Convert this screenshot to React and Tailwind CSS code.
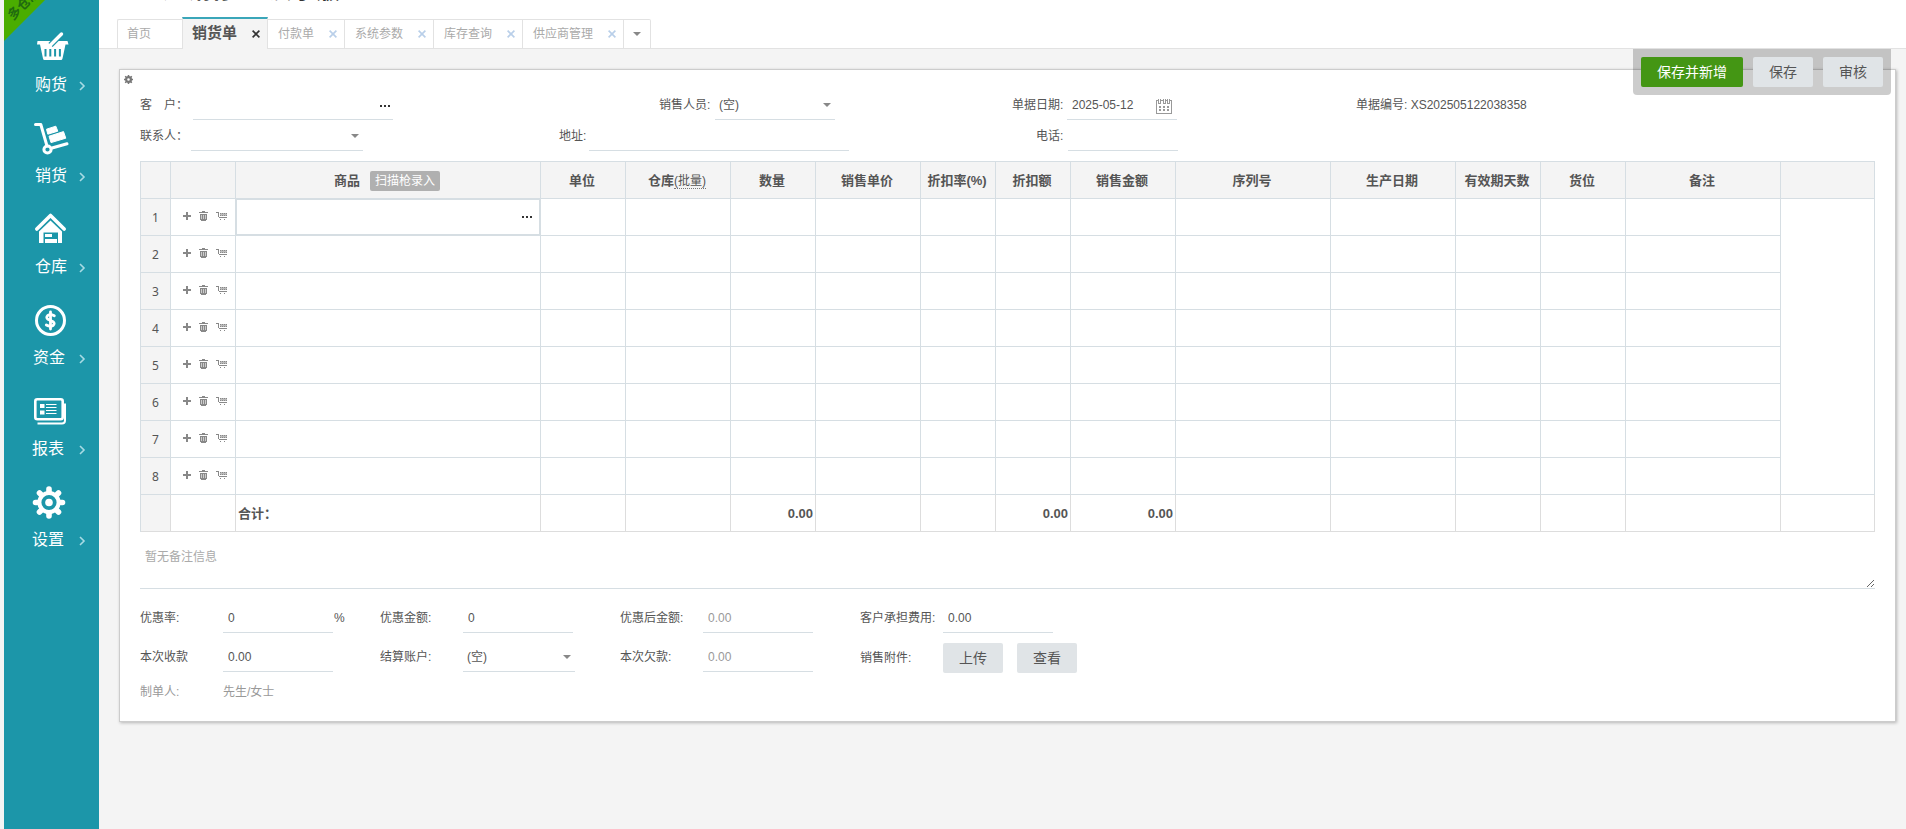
import { useState } from "react";

const menus = [
    { label: "购货", icon: BasketIcon, pad: "pl-[31px]" },
    { label: "销货", icon: TrolleyIcon, pad: "pl-[31px]" },
    { label: "仓库", icon: HouseIcon, pad: "pl-[31px]" },
    { label: "资金", icon: MoneyIcon, pad: "pl-[29px]" },
    { label: "报表", icon: ReportIcon, pad: "pl-7" },
    { label: "设置", icon: GearIcon, pad: "pl-7" },
];

const tabs = ["付款单", "系统参数", "库存查询", "供应商管理"];

const columns = [
    { key: "no", width: "w-[30px]" },
    { key: "ops", width: "w-[65px]" },
    { key: "goods", width: "w-[305px]", label: "商品" },
    { key: "unit", width: "w-[85px]", label: "单位" },
    { key: "store", width: "w-[105px]", label: "仓库" },
    { key: "qty", width: "w-[85px]", label: "数量", total: "0.00" },
    { key: "price", width: "w-[105px]", label: "销售单价" },
    { key: "rate", width: "w-[75px]", label: "折扣率(%)" },
    { key: "discount", width: "w-[75px]", label: "折扣额", total: "0.00" },
    { key: "amount", width: "w-[105px]", label: "销售金额", total: "0.00" },
    { key: "serial", width: "w-[155px]", label: "序列号" },
    { key: "date", width: "w-[125px]", label: "生产日期" },
    { key: "days", width: "w-[85px]", label: "有效期天数" },
    { key: "place", width: "w-[85px]", label: "货位" },
    { key: "note", width: "w-[155px]", label: "备注" },
    { key: "fill", width: "" },
];

const rows = [1, 2, 3, 4, 5, 6, 7, 8];

function BasketIcon() {
    return (
        <svg width="36" height="36" viewBox="0 0 36 36" fill="none">
            <path d="M3.5 12H33.5L34.5 15.5H31.5L28.5 29.5Q28.2 31 27 31H10.5Q9.3 31 9 29.5L6 15.5H3Z" fill="#fff" />
            <path d="M11.5 20v7.5M16.3 20v7.5M21.1 20v7.5M25.9 20v7.5" stroke="#1c96a9" strokeWidth="2" />
            <path d="M27.5 5L16.5 16" stroke="#1c96a9" strokeWidth="6" />
            <path d="M27.5 5L16.5 16" stroke="#fff" strokeWidth="3.4" strokeLinecap="round" />
        </svg>
    );
}

function TrolleyIcon() {
    return (
        <svg width="36" height="36" viewBox="0 0 36 36" fill="none">
            <path d="M1.5 4.5H6.8L13 26" stroke="#fff" strokeWidth="3" strokeLinecap="round" strokeLinejoin="round" />
            <circle cx="13.5" cy="29.5" r="3.6" stroke="#fff" strokeWidth="3" />
            <path d="M18 28L33 23.8" stroke="#fff" strokeWidth="3" strokeLinecap="round" />
            <path d="M12.5 9.2L21.8 6.2L23.8 11.2L13.8 14.2Z" fill="#fff" stroke="#fff" strokeLinejoin="round" />
            <path d="M15 16.2L29.5 11.6L31.8 18.2L17 22.6Z" fill="#fff" stroke="#fff" strokeLinejoin="round" />
        </svg>
    );
}

function HouseIcon() {
    return (
        <svg width="36" height="36" viewBox="0 0 36 36" fill="none">
            <path d="M2.8 18L16.5 4.5L30.2 18" stroke="#fff" strokeWidth="3.6" strokeLinecap="round" strokeLinejoin="round" />
            <path d="M16.5 9.5L28 20.5V32H5V20.5Z" fill="#fff" />
            <path d="M9.5 21.5H24V32H9.5Z" fill="#1c96a9" />
            <path d="M11 23h7v3h-7zM11 28h12v4H11z" fill="#fff" />
        </svg>
    );
}

function MoneyIcon() {
    return (
        <svg width="36" height="36" viewBox="0 0 36 36" fill="none" stroke="#fff">
            <circle cx="18.5" cy="18.5" r="14" strokeWidth="3" />
            <path d="M22.3 13.8Q18.5 11.8 15.8 13.4Q13.6 15.6 16 17.4L21 19.6Q23.4 21.6 21 23.6Q18 25.2 14.3 23" strokeWidth="2.8" strokeLinecap="round" />
            <path d="M18.5 10V27" strokeWidth="2.8" strokeLinecap="round" />
        </svg>
    );
}

function ReportIcon() {
    return (
        <svg width="36" height="36" viewBox="0 0 36 36" fill="none">
            <rect x="4.3" y="6.3" width="27.4" height="20" rx="2" stroke="#fff" strokeWidth="2.6" />
            <path d="M34 10.5V27.5Q34 30.5 31 30.5H6.5" stroke="#fff" strokeWidth="2" />
            <path d="M9 11h4.5v4H9zM9 17.5h4.5v4H9z" fill="#fff" />
            <path d="M15 11.5h10.5M15 14.5h10.5M15 17.5h10.5M15 20.5h10.5" stroke="#fff" strokeWidth="1" />
        </svg>
    );
}

function GearIcon() {
    return (
        <svg width="36" height="36" viewBox="0 0 36 36" fill="none">
            <path
                d="M18 5v27M4.500 18.500h27M8.500 9l19 19M27.500 9l-19 19"
                stroke="#fff"
                strokeWidth="5.6"
                strokeLinecap="round"
            />
            <circle cx="18" cy="18.5" r="9.6" fill="#1c96a9" stroke="#fff" strokeWidth="4" />
            <circle cx="18" cy="18.5" r="3.8" fill="#fff" />
        </svg>
    );
}

const SmallGear = () => (
    <svg width="9" height="9" viewBox="0 0 9 9" fill="none" stroke="#777">
        <path d="M4.5 0v9M0 4.5h9M1.2 1.2l6.6 6.6M7.8 1.2L1.2 7.8" strokeWidth="1.5" />
        <circle cx="4.5" cy="4.5" r="2.4" fill="#fff" strokeWidth="2.2" />
    </svg>
);

const Caret = () => (
    <svg className="pointer-events-none" width="8" height="4" viewBox="0 0 8 4" fill="#888">
        <path d="M0 0h8L4 4z" />
    </svg>
);

const Dots = () => (
    <svg width="10" height="2" viewBox="0 0 10 2" fill="#333" shapeRendering="crispEdges">
        <path d="M0 0h2v2H0zM4 0h2v2H4zM8 0h2v2H8z" />
    </svg>
);

const CloseIcon = () => (
    <svg width="8" height="8" viewBox="0 0 8 8" fill="none" stroke="currentColor" strokeWidth="1.6">
        <path d="M.6 .6l6.8 6.8M7.4 .6L.6 7.4" />
    </svg>
);

const PlusIcon = () => (
    <svg width="8" height="8" viewBox="0 0 8 8" fill="#888" shapeRendering="crispEdges">
        <path d="M3 0h2v8H3zM0 3h8v2H0z" />
    </svg>
);

const TrashIcon = () => (
    <svg width="9" height="10" viewBox="0 0 9 10" fill="#888" shapeRendering="crispEdges">
        <path d="M3 0h3v1H3zM0 1h9v1H0zM1 3h7v6H1zM2 9h5v1H2z" />
        <path d="M2 4h1v4H2zM4 4h1v4H4zM6 4h1v4H6z" fill="#ccc" />
    </svg>
);

const CartIcon = () => (
    <svg width="11" height="8" viewBox="0 0 11 8" fill="#888" shapeRendering="crispEdges">
        <path d="M0 0h2v1H0zM2 0h1v5H2zM3 5h8v1H3zM4 7h1v1H4zM8 7h1v1H8z" />
        <path d="M4 1h7v3H4z" fill="#bbb" />
        <path d="M4 1h1v1H4zM6 1h1v1H6zM8 1h1v1H8zM10 1h1v1h-1zM4 3h1v1H4zM6 3h1v1H6zM8 3h1v1H8zM10 3h1v1h-1z" />
    </svg>
);

const CalendarIcon = () => (
    <svg width="16" height="16" viewBox="0 0 16 16" fill="none" stroke="#999" shapeRendering="crispEdges">
        <path d="M2.5 2.5H.5v13h15v-13h-2M5 2.5h1.5M9.5 2.5H11" />
        <path d="M2.5 1v4h2v-4M7 1v4h2v-4M11.5 1v4h2v-4" />
        <path d="M3 9h2M7 9h2M11 9h2M3 12h2M7 12h2M11 12h2" strokeWidth="2" />
    </svg>
);

const Field = ({ id, label, labelWidth = "", width, value = "", muted, children }) => (
    <div className="flex items-center">
        <label htmlFor={id} className={`shrink-0 pb-0.5 whitespace-nowrap ${labelWidth}`}>{label}</label>
        <div className={`flex h-7 items-center border-b border-[#d6dee3] ${width}`}>
            <input
                id={id}
                type="text"
                defaultValue={value}
                readOnly={muted}
                className={`h-full w-full min-w-0 bg-transparent px-[5px] pb-0.5 outline-none ${muted ? "text-[#999]" : ""}`}
            />
            {children}
        </div>
    </div>
);

const SelectField = ({ id, label, labelWidth = "", width, option = "" }) => (
    <div className="flex items-center">
        <label htmlFor={id} className={`shrink-0 pb-0.5 whitespace-nowrap ${labelWidth}`}>{label}</label>
        <div className={`relative flex h-7 items-center border-b border-[#d6dee3] ${width}`}>
            <select id={id} className="h-full w-full appearance-none bg-transparent px-1 pb-0.5 outline-none">
                <option>{option}</option>
            </select>
            <span className="pointer-events-none absolute right-1 pb-0.5">
                <Caret />
            </span>
        </div>
    </div>
);

const GrayButton = ({ children }) => (
    <button type="button" className="h-[30px] w-[60px] rounded-xs bg-[#e0e4e7] text-sm text-[#555]">
        {children}
    </button>
);

const Sidebar = () => (
    <aside className="relative ml-1 w-[95px] shrink-0 bg-[#1c96a9] text-white">
        <div className="absolute top-0 left-0 size-[41px] overflow-hidden bg-[#4aad00] [clip-path:polygon(0_0,100%_0,0_100%)]">
            <span className="absolute -top-1 -left-3 w-16 origin-center -rotate-45 text-center text-[13px] leading-4 font-bold whitespace-nowrap text-[#1f6a10]">
                多仓版
            </span>
        </div>
        <nav className="pt-[29px]">
            {menus.map(({ label, icon: Icon, pad }) => (
                <a key={label} href="#" className={`block h-[91px] pr-[13px] ${pad}`}>
                    <span className="-ml-px block">
                        <Icon />
                    </span>
                    <span className="mt-2 flex items-center justify-between text-base leading-6">
                        {label}
                        <svg className="mt-0.5" width="7" height="10" viewBox="0 0 7 10" fill="none" stroke="#a8dbe4" strokeWidth="1.6">
                            <path d="M1 1l4 4-4 4" />
                        </svg>
                    </span>
                </a>
            ))}
        </nav>
    </aside>
);

const TabBar = () => (
    <header className="h-[49px] border-b border-[#e2e2e2] bg-white">
        <div className="h-[17px] overflow-hidden pl-16">
            <h1 className="-mt-[26px] text-2xl leading-8 font-bold whitespace-pre text-[#333]">进销存     演示版</h1>
        </div>
        <div className="flex h-8 items-end pl-[18px] text-xs text-[#aaa]">
            <button type="button" className="h-[30px] w-[65px] rounded-tl-xs border border-r-0 border-[#e2e2e2] px-[9px] text-left">
                首页
            </button>
            <div className="flex h-8 items-center border-x border-t-2 border-x-[#e2e2e2] border-t-[#3aa6b9] bg-[#f4f4f4] pr-[7px] pl-[9px] text-[#555]">
                <button type="button" className="pb-0.5 text-[15px] font-bold">销货单</button>
                <button type="button" aria-label="关闭" className="ml-[15px] text-[#333]"><CloseIcon /></button>
            </div>
            {tabs.map((tab) => (
                <div key={tab} className="flex h-[30px] items-center border-y border-r border-[#e2e2e2] pr-[7px] pl-2.5">
                    <button type="button">{tab}</button>
                    <button type="button" aria-label="关闭" className="ml-[15px] text-[#b9cfe9]"><CloseIcon /></button>
                </div>
            ))}
            <button type="button" aria-label="更多" className="flex h-[30px] w-[27px] items-center justify-center rounded-tr-xs border-y border-r border-[#e2e2e2]">
                <Caret />
            </button>
        </div>
    </header>
);

const HeaderCell = ({ column }) => {
    if (column.key === "goods") {
        return (
            <div className="flex items-center justify-center gap-2.5">
                {column.label}
                <button type="button" className="h-5 w-[70px] rounded-xs bg-[#b0b0b0] text-xs font-normal whitespace-nowrap text-white">
                    扫描枪录入
                </button>
            </div>
        );
    }
    if (column.key === "store") {
        return (
            <>
                {column.label}
                <a href="#" className="border-b border-dotted border-[#777] text-xs font-normal">(批量)</a>
            </>
        );
    }
    return column.label;
};

const GoodsTable = ({ active }) => (
    <table className="mt-2.5 w-full table-fixed border-separate border-spacing-0 border-t border-l border-[#d6dee3]">
        <colgroup>
            {columns.map((column) => (
                <col key={column.key} className={column.width} />
            ))}
        </colgroup>
        <thead>
            <tr className="h-[37px] bg-[#f4f4f4] text-[13px]">
                {columns.map((column) => (
                    <th key={column.key} className="border-r border-b border-[#d6dee3] pt-px pr-0.5 font-bold whitespace-nowrap">
                        <HeaderCell column={column} />
                    </th>
                ))}
            </tr>
        </thead>
        <tbody>
            {rows.map((row) => (
                <tr key={row} className="h-[37px]">
                    <td className="border-r border-b border-[#d6dee3] bg-[#f4f4f4] pt-0.5 text-center font-['Noto_Sans',sans-serif]">{row}</td>
                    <td className="border-r border-b border-[#d6dee3] p-0">
                        <div className="flex items-center gap-2 pb-0.5 pl-3">
                            <button type="button" aria-label="新增行"><PlusIcon /></button>
                            <button type="button" aria-label="删除行"><TrashIcon /></button>
                            <button type="button" aria-label="选择商品"><CartIcon /></button>
                        </div>
                    </td>
                    <td className="border-r border-b border-[#d6dee3] p-0">
                        {row === active && (
                            <div className="flex h-9 items-center border border-[#d6dee3] pr-[7px]">
                                <input aria-label="商品" className="h-full min-w-0 flex-1 px-1 outline-none" />
                                <button type="button" aria-label="选择"><Dots /></button>
                            </div>
                        )}
                    </td>
                    {columns.slice(3, -1).map((column) => (
                        <td key={column.key} className="border-r border-b border-[#d6dee3] p-0" />
                    ))}
                    {row === 1 && <td rowSpan={rows.length} className="border-r border-b border-[#d6dee3] p-0" />}
                </tr>
            ))}
        </tbody>
        <tfoot>
            <tr className="h-[37px] text-[13px] font-bold">
                <td className="border-r border-b border-[#ddd] bg-[#f4f4f4] p-0" />
                <td className="border-r border-b border-[#ddd] p-0" />
                <td className="border-r border-b border-[#ddd] px-0.5 pt-0.5">合计：</td>
                {columns.slice(3).map((column) => (
                    <td key={column.key} className="border-r border-b border-[#ddd] px-0.5 pt-0.5 text-right">{column.total}</td>
                ))}
            </tr>
        </tfoot>
    </table>
);

export default function App() {
    const [remark, setRemark] = useState("");

    return (
        <div className="flex min-h-screen bg-[#f4f4f4] font-['Liberation_Sans','Noto_Sans_CJK_SC',sans-serif] text-xs text-[#555]">
            <Sidebar />
            <div className="min-w-0 flex-1">
                <TabBar />
                <main className="relative pt-5 pr-2.5 pl-5">
                    <div className="absolute top-0 right-[15px] flex gap-2.5 rounded-b-sm bg-black/20 p-2">
                        <button type="button" className="h-[30px] w-[102px] rounded-xs bg-[#449614] text-sm text-white">
                            保存并新增
                        </button>
                        <GrayButton>保存</GrayButton>
                        <GrayButton>审核</GrayButton>
                    </div>

                    <form className="border border-[#ccc] bg-white pb-5 shadow-[1px_1px_3px_rgba(0,0,0,0.25)]">
                        <button type="button" aria-label="设置列" className="mt-[5px] mb-2 ml-1 block">
                            <SmallGear />
                        </button>
                        <div className="px-5">
                            <div className="flex items-center">
                                <div className="w-[519px]">
                                    <Field id="customer" label="客　户：" labelWidth="w-[53px]" width="w-[200px] pr-[3px]">
                                        <button type="button" aria-label="选择客户"><Dots /></button>
                                    </Field>
                                </div>
                                <div className="w-[353px]">
                                    <SelectField id="seller" label="销售人员:" labelWidth="w-14" width="w-[120px]" option="(空)" />
                                </div>
                                <div className="w-[344px]">
                                    <Field id="date" label="单据日期:" labelWidth="w-[55px]" width="w-[110px] pr-[5px]" value="2025-05-12">
                                        <button type="button" aria-label="选择日期"><CalendarIcon /></button>
                                    </Field>
                                </div>
                                <div className="pb-0.5 whitespace-nowrap">单据编号: XS202505122038358</div>
                            </div>
                            <div className="mt-[3px] flex items-center">
                                <div className="w-[419px]">
                                    <SelectField id="contact" label="联系人：" labelWidth="w-[51px]" width="w-[172px]" />
                                </div>
                                <div className="w-[477px]">
                                    <Field id="address" label="地址:" labelWidth="w-[30px]" width="w-[260px]" />
                                </div>
                                <Field id="phone" label="电话:" labelWidth="w-8" width="w-[110px]" />
                            </div>

                            <GoodsTable active={1} />

                            <textarea
                                aria-label="备注信息"
                                placeholder="暂无备注信息"
                                value={remark}
                                onChange={(e) => setRemark(e.target.value)}
                                className="block h-[57px] w-full resize border-b border-[#d6dee3] px-[5px] pt-4 leading-[18px] outline-none placeholder:text-[#aaa]"
                            />

                            <div className="mt-4 grid grid-cols-[repeat(4,240px)] items-center gap-y-2.5">
                                <div className="flex items-center">
                                    <Field id="rate" label="优惠率:" labelWidth="w-[83px]" width="w-[110px]" value="0" />
                                    <span className="ml-px pb-0.5">%</span>
                                </div>
                                <Field id="discount" label="优惠金额:" labelWidth="w-[83px]" width="w-[110px]" value="0" />
                                <Field id="after" label="优惠后金额:" labelWidth="w-[83px]" width="w-[110px]" value="0.00" muted />
                                <Field id="fee" label="客户承担费用:" labelWidth="w-[83px]" width="w-[110px]" value="0.00" />
                                <Field id="paid" label="本次收款" labelWidth="w-[83px]" width="w-[110px]" value="0.00" />
                                <SelectField id="account" label="结算账户:" labelWidth="w-[83px]" width="w-[112px]" option="(空)" />
                                <Field id="debt" label="本次欠款:" labelWidth="w-[83px]" width="w-[110px]" value="0.00" muted />
                                <div className="flex items-center">
                                    <span className="w-[83px]">销售附件:</span>
                                    <GrayButton>上传</GrayButton>
                                    <span className="w-3.5" />
                                    <GrayButton>查看</GrayButton>
                                </div>
                                <div className="flex leading-[18px] text-[#999]">
                                    <span className="w-[83px]">制单人:</span>
                                    <span>先生/女士</span>
                                </div>
                            </div>
                        </div>
                    </form>
                </main>
            </div>
        </div>
    );
}
